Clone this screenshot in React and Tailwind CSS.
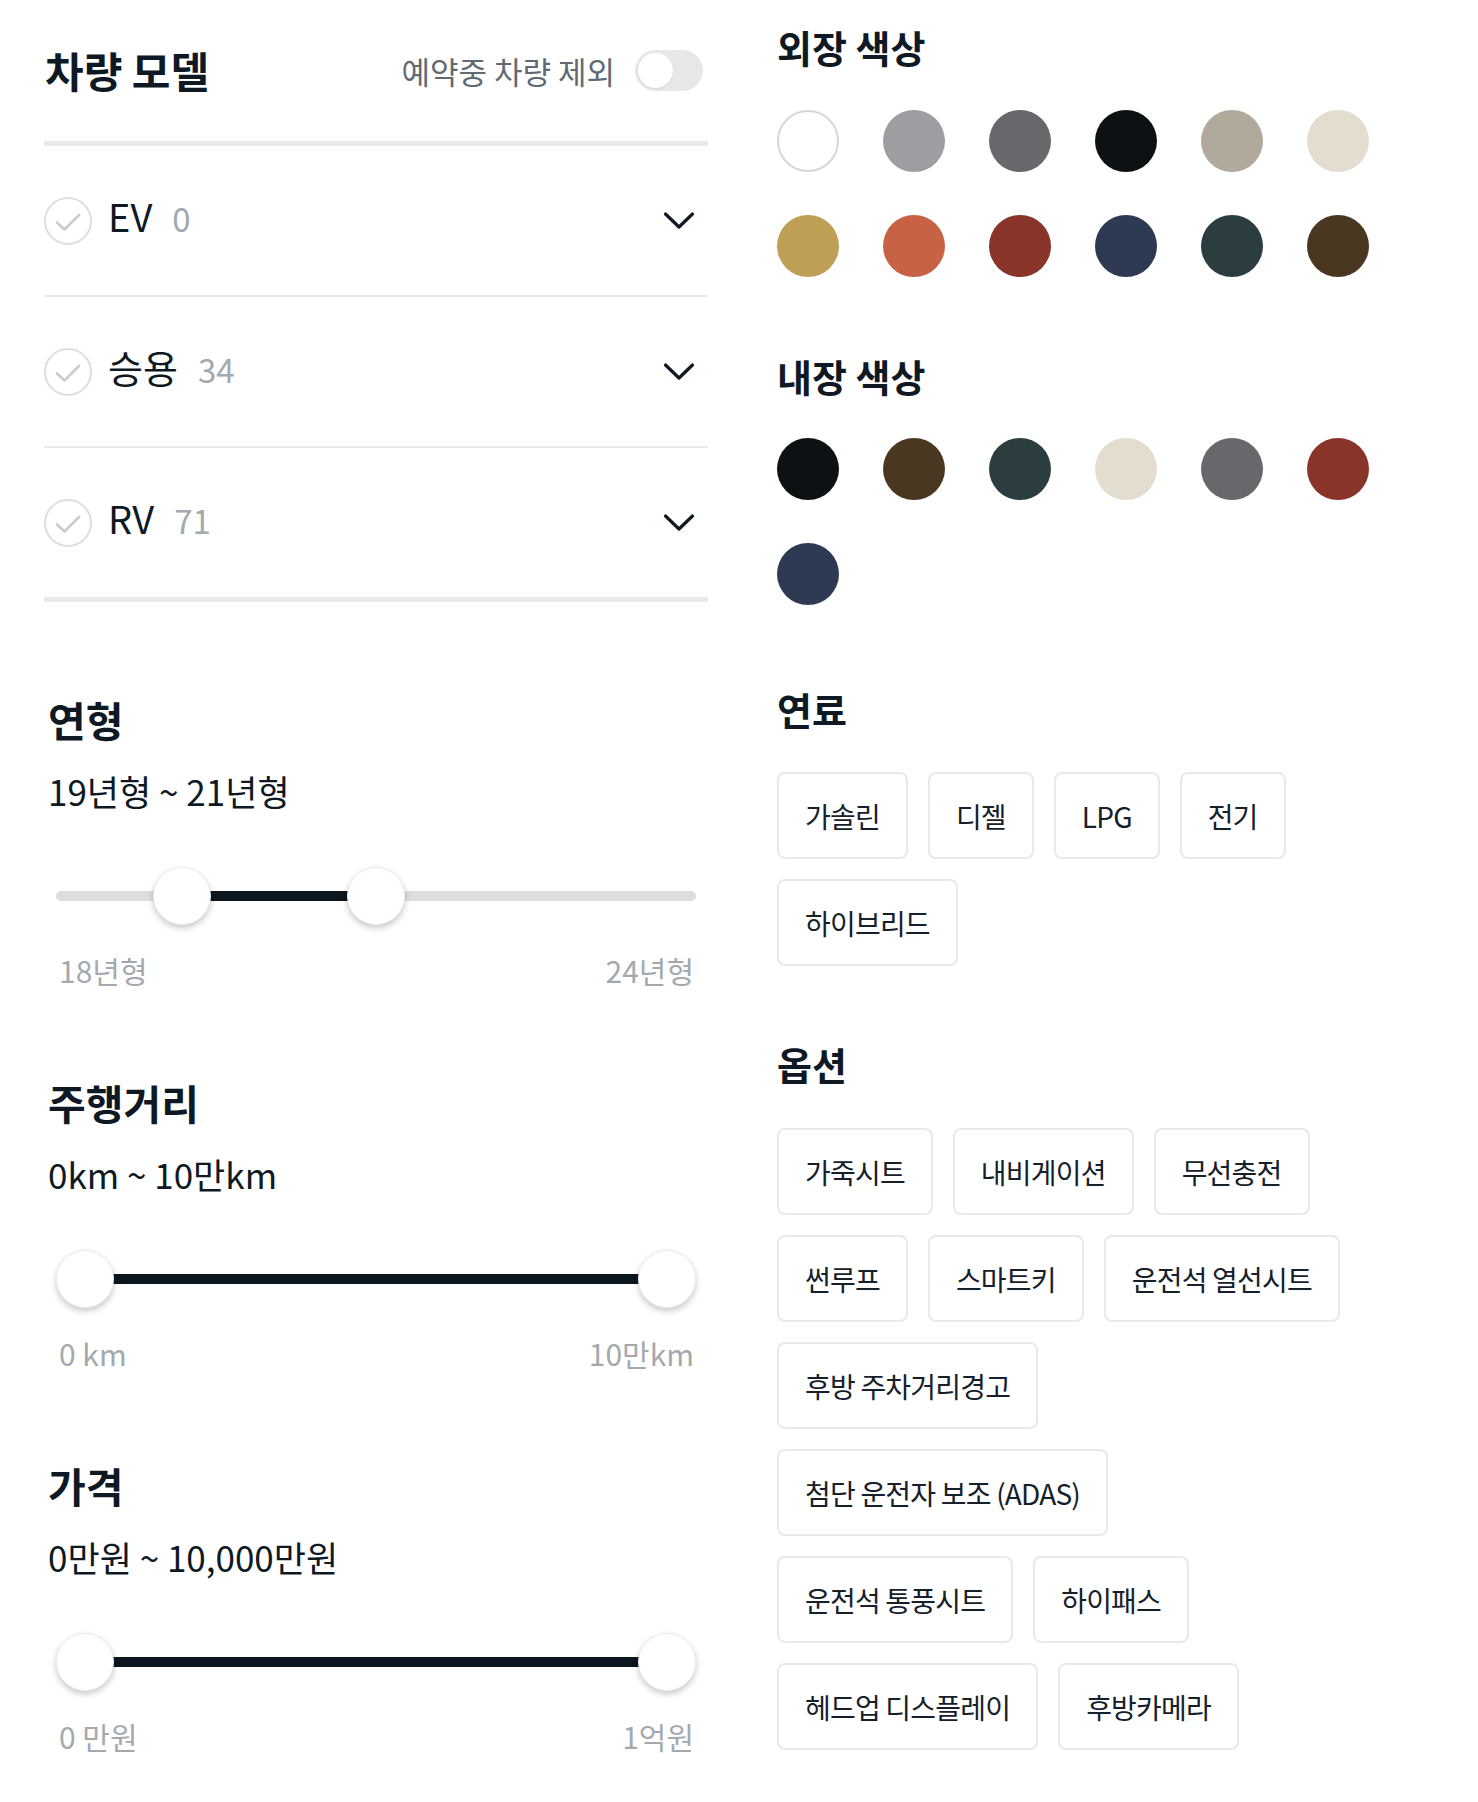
import React from "react";

const exterior = ["#ffffff", "#9e9ea2", "#68676c", "#0c1213", "#b0a99c", "#e3ddd0", "#bf9e56", "#c86245", "#883428", "#2d3a52", "#2c3d40", "#4a3722"];
const interior = ["#0c1213", "#4a3722", "#2c3d40", "#e3ddd0", "#68676c", "#883428", "#2d3a52"];

const fuelRows = [["가솔린", "디젤", "LPG", "전기"], ["하이브리드"]];
const optionRows = [
  ["가죽시트", "내비게이션", "무선충전"],
  ["썬루프", "스마트키", "운전석 열선시트"],
  ["후방 주차거리경고"],
  ["첨단 운전자 보조 (ADAS)"],
  ["운전석 통풍시트", "하이패스"],
  ["헤드업 디스플레이", "후방카메라"],
];

function CheckCircle() {
  return (
    <svg width="48" height="48" viewBox="0 0 48 48" className="shrink-0">
      <circle cx="24" cy="24" r="23" fill="white" stroke="#dedfe0" strokeWidth="2" />
      <path d="M13 25.5 L20.5 32.5 L35 18" fill="none" stroke="#c9cbcd" strokeWidth="2.6" strokeLinecap="round" strokeLinejoin="round" />
    </svg>
  );
}

function Chevron() {
  return (
    <svg width="32" height="20" viewBox="0 0 32 20" className="shrink-0">
      <path d="M2.5 3 L16 16 L29.5 3" fill="none" stroke="#0e1923" strokeWidth="3.2" strokeLinecap="round" strokeLinejoin="round" />
    </svg>
  );
}

function ModelRow({ name, count }) {
  return (
    <div className="h-[149px] flex items-center justify-between">
      <div className="flex items-center">
        <CheckCircle />
        <div className="flex items-baseline ml-[16px] mb-[10px]">
          <span className="text-[38px] leading-none text-[#0e1923]">{name}</span>
          <span className="ml-[20px] text-[33px] leading-none text-[#a4a9ae]">{count}</span>
        </div>
      </div>
      <div className="mr-[13px] flex items-center">
        <Chevron />
      </div>
    </div>
  );
}

function RangeSlider({ min, max, lo, hi }) {
  const usable = 582;
  const loLeft = ((lo - min) / (max - min)) * usable;
  const hiLeft = ((hi - min) / (max - min)) * usable;
  return (
    <div className="relative h-[60px] mx-[12px]">
      <div className="absolute left-0 right-0 top-[25px] h-[10px] rounded-full bg-[#dcdddf]" />
      <div className="absolute top-[25px] h-[10px] bg-[#0b1620]" style={{ left: loLeft + 29, width: hiLeft - loLeft }} />
      <div className="absolute top-[1px] w-[58px] h-[58px] rounded-full bg-white border border-[#eeeeee] shadow-[0_3px_6px_rgba(0,0,0,0.22)]" style={{ left: loLeft }} />
      <div className="absolute top-[1px] w-[58px] h-[58px] rounded-full bg-white border border-[#eeeeee] shadow-[0_3px_6px_rgba(0,0,0,0.22)]" style={{ left: hiLeft }} />
    </div>
  );
}

function RangeSection({ title, value, min, max, lo, hi, minLabel, maxLabel, className }) {
  return (
    <div className={"flex flex-col " + className}>
      <div className="h-[50px] flex items-center pl-[4px] text-[41px] leading-none font-bold text-[#0e1923]">{title}</div>
      <div className="mt-[24px] h-[44px] flex items-center pl-[4px] text-[35px] leading-none text-[#0e1923] whitespace-pre">{value}</div>
      <div className="mt-[54px]">
        <RangeSlider min={min} max={max} lo={lo} hi={hi} />
      </div>
      <div className="mt-[26px] h-[36px] flex items-center justify-between pl-[15px] pr-[14px] text-[30px] leading-none text-[#a4a9ae]">
        <span>{minLabel}</span>
        <span>{maxLabel}</span>
      </div>
    </div>
  );
}

function Swatches({ colors, className }) {
  return (
    <div className={"grid grid-cols-[repeat(6,62px)] gap-x-[44px] gap-y-[43px] " + className}>
      {colors.map((c, i) => (
        <div
          key={i}
          className={"w-[62px] h-[62px] rounded-full " + (c === "#ffffff" ? "border-2 border-[#d6d7d8]" : "")}
          style={{ backgroundColor: c }}
        />
      ))}
    </div>
  );
}

function ChipRows({ rows, className }) {
  return (
    <div className={"flex flex-col gap-y-[20px] " + className}>
      {rows.map((row, i) => (
        <div key={i} className="flex gap-x-[20px]">
          {row.map((t) => (
            <div
              key={t}
              className="h-[87px] px-[26px] flex items-center rounded-[8px] border-2 border-[#e8e9ea] bg-white text-[28px] leading-none text-[#15202a] tracking-[-0.8px] whitespace-nowrap"
            >
              {t}
            </div>
          ))}
        </div>
      ))}
    </div>
  );
}

function SectionTitle({ children, className }) {
  return (
    <div className={"h-[50px] flex items-center text-[38px] leading-none font-bold text-[#0e1923] " + className}>
      {children}
    </div>
  );
}

export default function App() {
  return (
    <div className="flex w-[1478px] min-h-[1802px] bg-white font-['Noto_Sans_CJK_KR',sans-serif]">
      {/* Left column */}
      <div className="ml-[44px] w-[664px] flex flex-col">
        <div className="mt-[40px] h-[60px] flex items-center justify-between">
          <h1 className="pl-[1px] text-[42px] leading-none font-bold text-[#0e1923]">차량 모델</h1>
          <div className="flex items-center gap-[20px] mr-[5px]">
            <span className="text-[31px] leading-none text-[#5f6a73]">예약중 차량 제외</span>
            <div className="w-[68px] h-[41px] rounded-full bg-[#e6e7e8] flex items-center px-[3px]">
              <div className="w-[35px] h-[35px] rounded-full bg-white shadow-[0_1px_2px_rgba(0,0,0,0.08)]" />
            </div>
          </div>
        </div>
        <div className="mt-[41px] h-[5px] bg-[#e8e9ea]" />
        <ModelRow name="EV" count="0" />
        <div className="h-[2px] bg-[#e8e9ea]" />
        <ModelRow name="승용" count="34" />
        <div className="h-[2px] bg-[#e8e9ea]" />
        <ModelRow name="RV" count="71" />
        <div className="h-[5px] bg-[#e8e9ea]" />

        <RangeSection className="mt-[92px]" title="연형" value="19년형 ~ 21년형" min={18} max={24} lo={19} hi={21} minLabel="18년형" maxLabel="24년형" />
        <RangeSection className="mt-[89px]" title="주행거리" value="0km ~ 10만km" min={0} max={10} lo={0} hi={10} minLabel="0 km" maxLabel="10만km" />
        <RangeSection className="mt-[89px]" title="가격" value="0만원 ~ 10,000만원" min={0} max={10000} lo={0} hi={10000} minLabel="0 만원" maxLabel="1억원" />
      </div>

      {/* Right column */}
      <div className="ml-[69px] flex flex-col">
        <SectionTitle className="mt-[22px]">외장 색상</SectionTitle>
        <Swatches colors={exterior} className="mt-[38px]" />
        <SectionTitle className="mt-[74px]">내장 색상</SectionTitle>
        <Swatches colors={interior} className="mt-[37px]" />
        <SectionTitle className="mt-[79px]">연료</SectionTitle>
        <ChipRows rows={fuelRows} className="mt-[38px]" />
        <SectionTitle className="mt-[73px]">옵션</SectionTitle>
        <ChipRows rows={optionRows} className="mt-[39px]" />
      </div>
    </div>
  );
}
